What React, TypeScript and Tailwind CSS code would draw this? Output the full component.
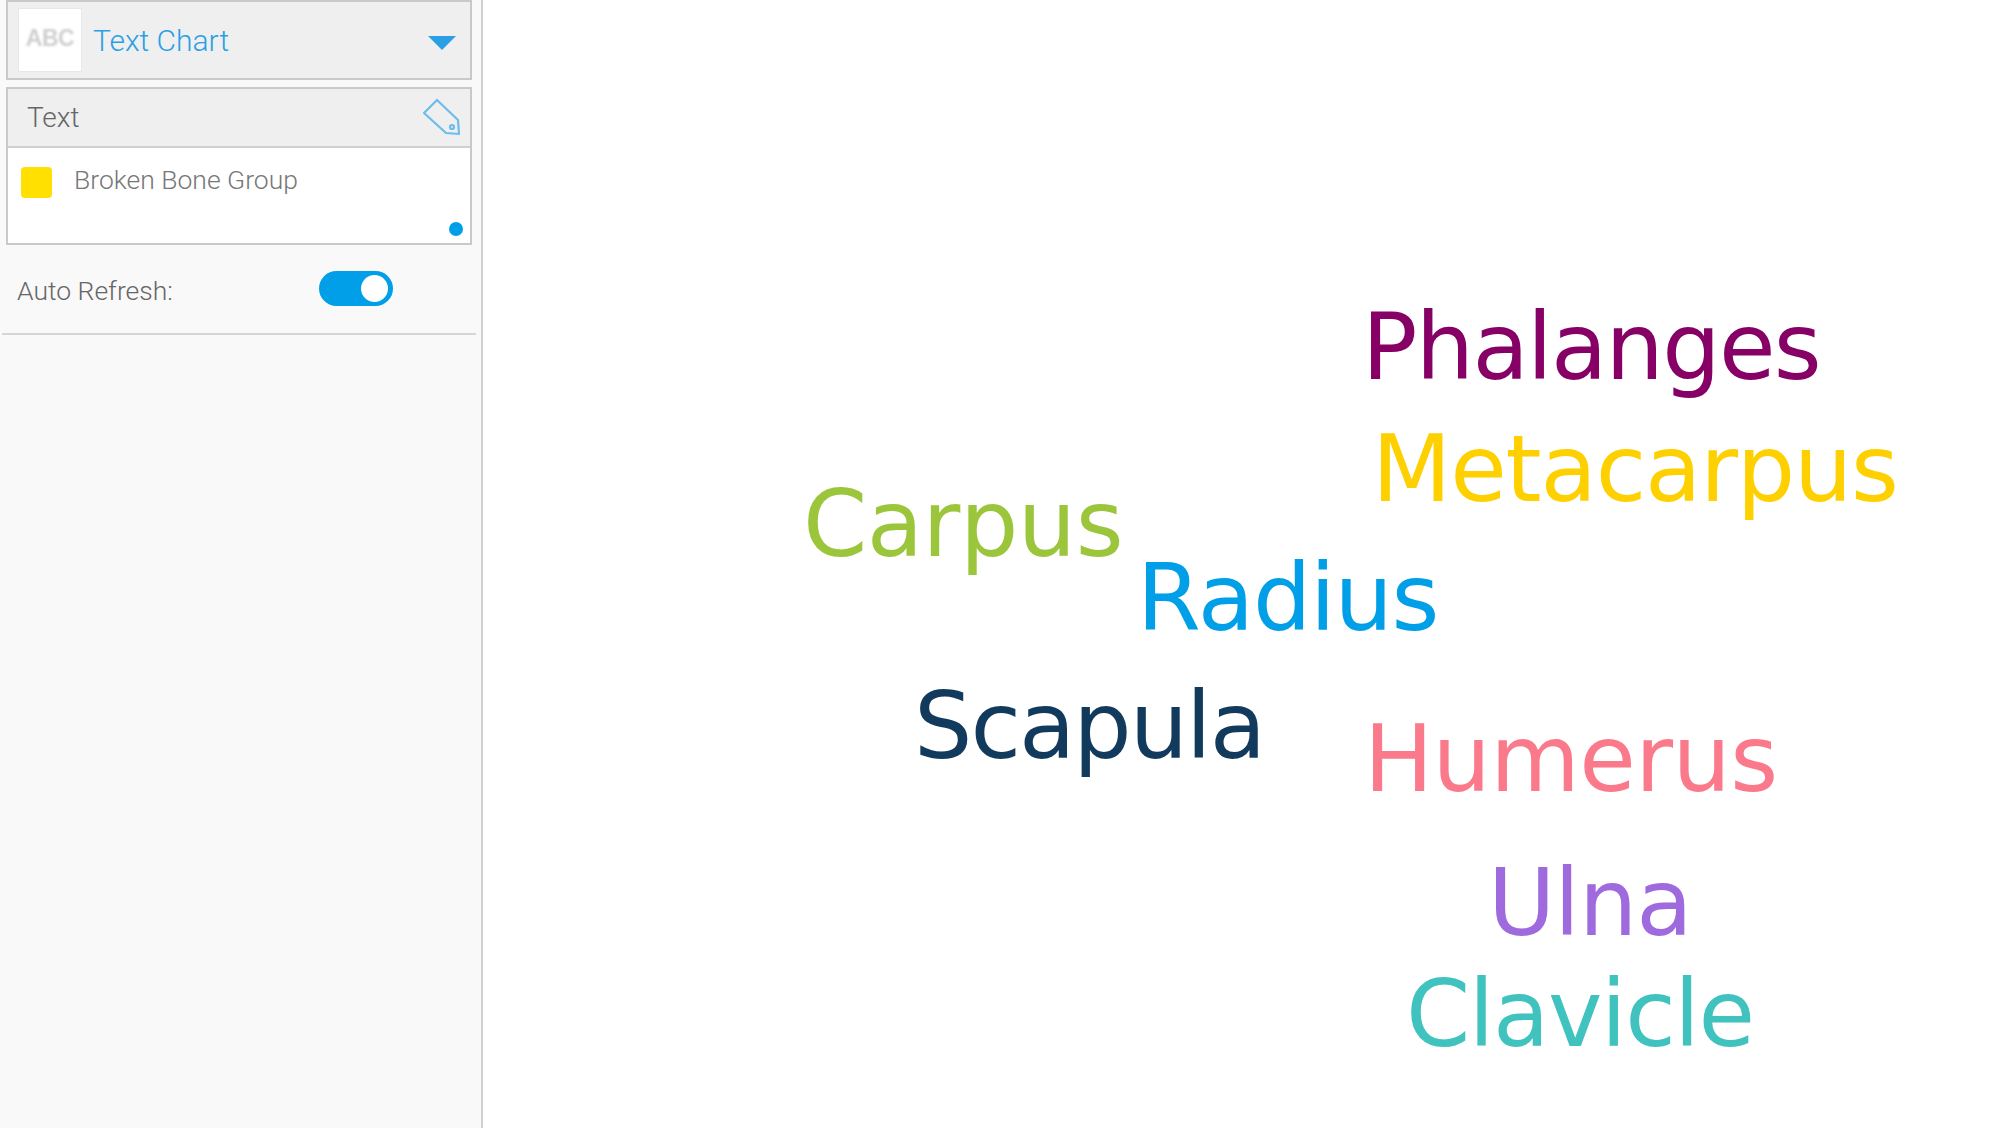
import React from 'react';

const words = [
  { text: 'Phalanges', className: 'left-[1362px] top-[298px] text-[#860066] tracking-[-1.7px]' },
  { text: 'Metacarpus', className: 'left-[1372px] top-[420px] text-[#ffd000] tracking-[-1.2px]' },
  { text: 'Carpus', className: 'left-[803px] top-[475px] text-[#9bc63c] tracking-[-0.5px]' },
  { text: 'Radius', className: 'left-[1137px] top-[549px] text-[#019fe8] tracking-[-1.2px]' },
  { text: 'Scapula', className: 'left-[914px] top-[677px] text-[#123a5c] tracking-[-2px]' },
  { text: 'Humerus', className: 'left-[1364px] top-[710px] text-[#fa7a8c] tracking-[-0.6px]' },
  { text: 'Ulna', className: 'left-[1488px] top-[854px] text-[#a06adf] tracking-[-1px]' },
  { text: 'Clavicle', className: 'left-[1406px] top-[965px] text-[#40c2bf] tracking-[-1.4px]' },
];

function TagIcon() {
  return (
    <svg width="40" height="40" viewBox="0 0 40 40" fill="none" stroke="#6dbcee" strokeWidth="2.2" className="mt-[-2px]">
      <path d="M2 16 L15 3 L36 23 L37 37 L24 36 Z" strokeLinejoin="round" />
      <circle cx="30" cy="30" r="2" />
    </svg>
  );
}

export default function App() {
  return (
    <div className="flex h-[1128px] w-[1999px] overflow-hidden bg-white font-['Roboto',sans-serif] font-light">
      <aside className="flex w-[483px] shrink-0 flex-col border-r-2 border-[#d0d0d0] bg-[#f9f9f9] pl-[6px] pr-[9px]">
        <div className="flex h-[80px] items-center border-2 border-[#c9c9c9] bg-[#efefef] pl-[10px] pr-[14px]">
          <div className="flex h-[64px] w-[64px] items-center justify-center border border-[#e8e8e8] bg-white">
            <span className="mt-[-3px] font-['Liberation_Sans',sans-serif] text-[23px] font-bold tracking-[-0.5px] text-[#cfcfcf] blur-[1px]">ABC</span>
          </div>
          <span className="ml-[11px] text-[30px] text-[#2b9fe6]">Text Chart</span>
          <svg width="28" height="14" viewBox="0 0 28 14" className="ml-auto mt-[6px]">
            <path d="M0 0 H28 L14 14 Z" fill="#2b9fe6" />
          </svg>
        </div>

        <div className="mt-[7px] border-2 border-[#c9c9c9] bg-white">
          <div className="flex h-[59px] items-center justify-between border-b-2 border-[#d0d0d0] bg-[#efefef] pl-[19px] pr-[8px]">
            <span className="mt-[1px] text-[28px] text-[#666666]">Text</span>
            <TagIcon />
          </div>
          <div className="relative h-[95px] pl-[13px] pt-[19px]">
            <div className="flex items-start">
              <div className="h-[31px] w-[31px] rounded-[4px] bg-[#ffe000]" />
              <span className="ml-[22px] mt-[-5px] text-[26.5px] leading-[36px] text-[#777777]">Broken Bone Group</span>
            </div>
            <div className="absolute bottom-[7px] right-[7px] h-[14px] w-[14px] rounded-full bg-[#019fe8]" />
          </div>
        </div>

        <div className="mt-[24px] flex items-center pl-[11px]">
          <span className="mt-[4px] w-[302px] text-[26.5px] leading-[35px] text-[#666666]">Auto Refresh:</span>
          <div className="flex h-[35px] w-[74px] items-center justify-end rounded-full bg-[#019fe8] pr-[5px]">
            <div className="h-[27px] w-[27px] rounded-full bg-white" />
          </div>
        </div>

        <div className="ml-[-4px] mr-[-4px] mt-[25px] border-b-2 border-[#d6d6d6]" />
      </aside>

      <main className="flex-1">
        {words.map((word) => (
          <span
            key={word.text}
            className={`absolute whitespace-nowrap font-['DejaVu_Sans',sans-serif] text-[92px] font-normal leading-[100px] ${word.className}`}
          >
            {word.text}
          </span>
        ))}
      </main>
    </div>
  );
}
